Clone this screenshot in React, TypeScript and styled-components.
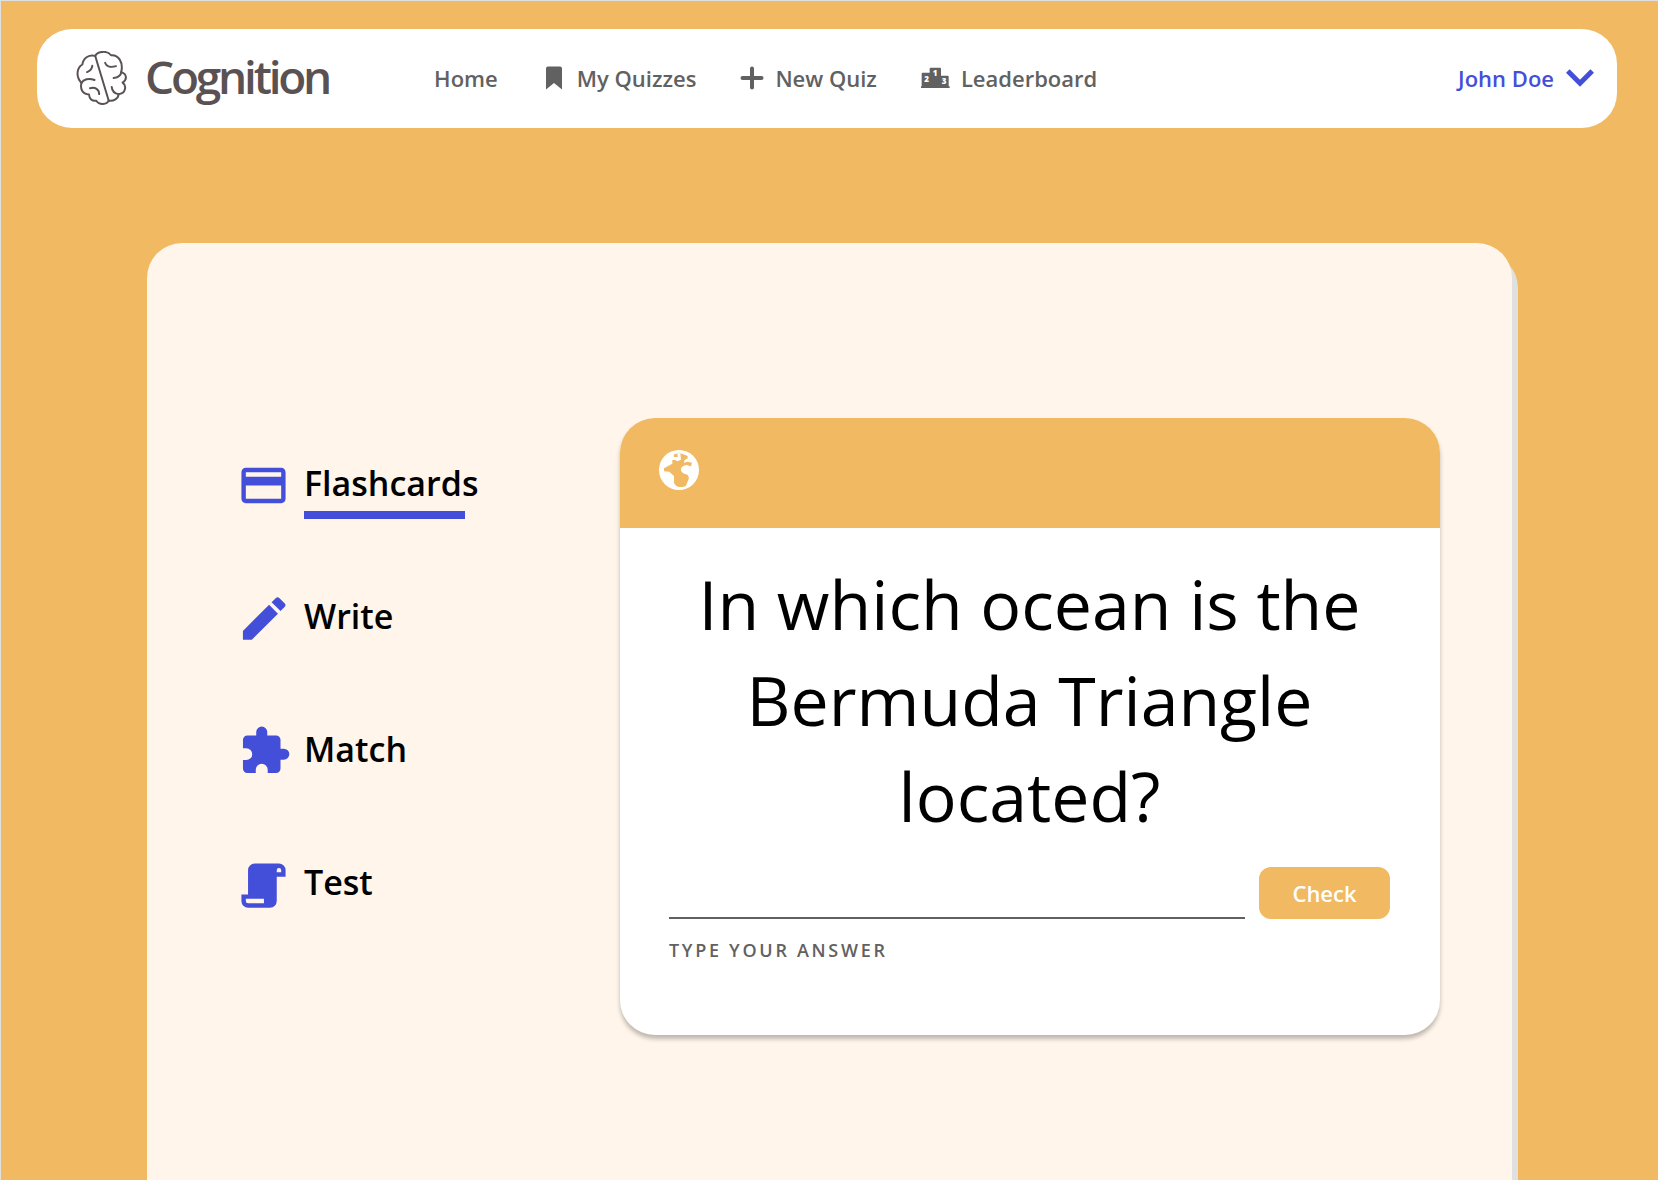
import React from "react";
import styled, { createGlobalStyle, ThemeProvider } from "styled-components";

const theme = {
  amber: "#f0b962",
  cream: "#fff5ea",
  indigo: "#444fd9",
  grey: "#616161",
  logo: "#5a5152",
  edge: "#e0e0e0",
};

const GlobalStyle = createGlobalStyle`
  *, *::before, *::after { box-sizing: border-box; }
  body {
    margin: 0;
    background: ${theme.amber};
    font-family: "Open Sans", "Noto Sans", sans-serif;
  }
  svg { display: block; flex: none; }
`;

const Page = styled.div`
  display: flex;
  flex-direction: column;
  min-height: 100vh;
  border-top: 1px solid ${(p) => p.theme.edge};
  border-left: 1px solid ${(p) => p.theme.edge};
`;

const TopBar = styled.header`
  display: flex;
  align-items: center;
  min-height: 99px;
  margin: 28px 41px 0 36px;
  padding: 0 23px 2px 39px;
  border-radius: 35px;
  background: #fff;
`;

const Brand = styled.a`
  display: flex;
  align-items: center;
  gap: 18px;
  color: ${(p) => p.theme.logo};
  text-decoration: none;
`;

const BrandName = styled.span`
  padding-bottom: 4px;
  font-size: 46px;
  font-weight: 600;
  line-height: 56px;
  letter-spacing: -0.07em;
`;

const Links = styled.nav`
  display: flex;
  align-items: center;
  gap: 44px;
  margin-left: 105px;
`;

const NavLink = styled.a`
  display: flex;
  align-items: center;
  gap: 11px;
  color: ${(p) => p.theme.grey};
  font-size: 22px;
  font-weight: 600;
  line-height: 30px;
  text-decoration: none;
  white-space: nowrap;
`;

const UserButton = styled.button`
  display: flex;
  align-items: center;
  gap: 12px;
  margin-left: auto;
  padding: 0;
  border: 0;
  background: none;
  color: ${(p) => p.theme.indigo};
  font: inherit;
  font-size: 22px;
  font-weight: 600;
  line-height: 30px;
  white-space: nowrap;
  cursor: pointer;
`;

const Panel = styled.main`
  display: grid;
  grid-template-columns: 383px minmax(0, 1fr);
  align-items: start;
  flex: 1;
  margin: 115px 146px 0;
  padding: 175px 72px 90px 90px;
  border-radius: 35px 35px 0 0;
  background: ${(p) => p.theme.cream};
  box-shadow: 6px 10px 0 ${(p) => p.theme.edge};
`;

const Modes = styled.nav`
  display: grid;
  grid-auto-rows: 133px;
  justify-items: start;
  padding-top: 41px;
`;

const ModeLink = styled.a`
  display: flex;
  align-items: flex-start;
  gap: 14px;
  color: ${(p) => p.theme.indigo};
  text-decoration: none;
`;

const ModeName = styled.span<{ $active?: boolean }>`
  color: #000;
  font-size: 34px;
  font-weight: 600;
  line-height: 48px;

  &::after {
    content: "";
    display: ${(p) => (p.$active ? "block" : "none")};
    width: 92%;
    height: 8px;
    margin-top: 4px;
    background: ${(p) => p.theme.indigo};
  }
`;

const Card = styled.section`
  overflow: hidden;
  border-radius: 35px;
  background: #fff;
  box-shadow: 0 4px 4px rgba(0, 0, 0, 0.25);
`;

const CardHead = styled.div`
  height: 110px;
  padding: 32px 39px;
  background: ${(p) => p.theme.amber};
`;

const CardBody = styled.div`
  padding: 28px 50px 73px 49px;
`;

const Question = styled.h1`
  margin: 0;
  font-size: 68px;
  font-weight: 400;
  line-height: 96px;
  text-align: center;
`;

const AnswerForm = styled.form`
  display: grid;
  grid-template-columns: minmax(0, 1fr) 131px;
  column-gap: 14px;
  row-gap: 19px;
  margin-top: 23px;
`;

const AnswerInput = styled.input`
  width: 100%;
  height: 52px;
  padding: 0;
  border: 0;
  border-bottom: 2px solid ${(p) => p.theme.grey};
  border-radius: 0;
  background: none;
  font: inherit;
  font-size: 22px;
  outline: none;
`;

const AnswerLabel = styled.label`
  grid-row: 2;
  color: ${(p) => p.theme.grey};
  font-size: 18px;
  font-weight: 600;
  line-height: 24px;
  letter-spacing: 0.15em;
`;

const CheckButton = styled.button`
  height: 52px;
  padding: 0;
  border: 0;
  border-radius: 12px;
  background: ${(p) => p.theme.amber};
  color: #fff;
  font: inherit;
  font-size: 22px;
  font-weight: 600;
  cursor: pointer;
`;

const BrainLogo = () => (
  <svg width="51" height="54" viewBox="34 31 154 164" fill="none" stroke="currentColor" strokeWidth="6" strokeLinecap="round" strokeLinejoin="round" aria-hidden="true">
    <path d="M92 46 133 182" />
    <path d="M92 46C75 40 55 52 53 72C36 82 32 108 50 128C46 146 52 162 73 163C74 176 82 184 95 182C104 196 128 194 133 182" />
    <path d="M92 46C98 32 128 28 140 44C162 42 178 64 171 95C188 100 190 118 175 127C188 136 185 160 163 162C162 176 148 184 133 182" />
    <path d="M83 76C82 86 77 91 67 95" />
    <path d="M50 128C56 117 72 112 90 119" />
    <path d="M76 144C92 139 104 148 104 162" />
    <path d="M122 67C126 78 139 82 155 77" />
    <path d="M171 95C170 104 162 111 148 113" />
    <path d="M142 140C143 152 150 160 163 162" />
  </svg>
);

const BookmarkIcon = () => (
  <svg width="24" height="24" viewBox="0 0 24 24" fill="currentColor" aria-hidden="true">
    <path d="M6 0.500H18A2 2 0 0 1 20 2.500V23.500L12 17L4 23.500V2.500A2 2 0 0 1 6 0.500Z" />
  </svg>
);

const PlusIcon = () => (
  <svg width="24" height="24" viewBox="0 0 24 24" fill="none" stroke="currentColor" strokeWidth="4" strokeLinecap="round" aria-hidden="true">
    <path d="M12 2.500V21.500M2.500 12H21.500" />
  </svg>
);

const PodiumNumber = styled.text`
  fill: #fff;
  font-size: 24px;
  font-weight: 800;
  text-anchor: middle;
`;

const PodiumIcon = () => (
  <svg width="29" height="22" viewBox="574 82 87 66" fill="currentColor" aria-hidden="true">
    <path d="M576 102a3 3 0 0 1 3-3H600V87a3 3 0 0 1 3-3H631a3 3 0 0 1 3 3V108H654a3 3 0 0 1 3 3V140H660V145H574V140H576Z" />
    <PodiumNumber x="591" y="126">2</PodiumNumber>
    <PodiumNumber x="616" y="110">1</PodiumNumber>
    <PodiumNumber x="643" y="133">3</PodiumNumber>
  </svg>
);

const ChevronIcon = () => (
  <svg width="28" height="18" viewBox="0 0 28 18" fill="none" stroke="currentColor" strokeWidth="5" aria-hidden="true">
    <path d="M1.800 2 14 14.200 26.200 2" />
  </svg>
);

const ModeIcon = ({ box, d }: { box: string; d: string }) => (
  <svg width="53" height="53" viewBox={box} fill="currentColor" fillRule="evenodd" aria-hidden="true">
    <path d={d} />
  </svg>
);

const GlobeIcon = () => (
  <svg width="40" height="40" viewBox="177 150 120 120" role="img" aria-label="Geography">
    <circle cx="237" cy="210" r="60" fill="#fff" />
    <path
      fill={theme.amber}
      d="M192 205 217 191V180H226L232 184 243 179 241 160 263 168V175L254 180 252 189 262 185 276 188 273 199 260 195C247 196 242 204 243 211C246 222 256 221 263 225L267 234 258 257C250 262 235 262 228 257L222 249V228L208 215 192 214ZM221 164 232 160 233 171 222 171Z"
    />
  </svg>
);

const modes = [
  {
    name: "Flashcards",
    active: true,
    box: "0 0 24 24",
    d: "M20 4H4c-1.110 0-1.990.89-1.990 2L2 18c0 1.110.89 2 2 2h16c1.110 0 2-.89 2-2V6c0-1.110-.89-2-2-2zm0 14H4v-6h16v6zm0-10H4V6h16v2z",
  },
  {
    name: "Write",
    box: "0.5 0.8 22.4 22.4",
    d: "M3 17.250V21h3.750L17.810 9.940l-3.750-3.750L3 17.250zM20.710 7.040c.39-.39.39-1.020 0-1.410l-2.340-2.340c-.39-.39-1.020-.39-1.410 0l-1.830 1.830 3.750 3.750 1.830-1.830z",
  },
  {
    name: "Match",
    box: "-0.7 0.3 24 24",
    d: "M20.500 11H19V7a2 2 0 0 0-2-2h-4V3.500a2.500 2.500 0 0 0-5 0V5H4a2 2 0 0 0-2 2v3.800h1.500a2.700 2.700 0 0 1 0 5.400H2V20a2 2 0 0 0 2 2h3.800v-1.500a2.700 2.700 0 0 1 5.400 0V22H17a2 2 0 0 0 2-2v-4h1.500a2.500 2.500 0 0 0 0-5z",
  },
  {
    name: "Test",
    box: "0 -0.5 24 24",
    d: "M8 2h11a3 3 0 0 1 3 3v3h-4v11a3 3 0 0 1-3 3H5a3 3 0 0 1-3-3v-3h3V5a3 3 0 0 1 3-3zM19 4a1 1 0 0 0-1 1v1h2V5a1 1 0 0 0-1-1zM4 18v1a1 1 0 0 0 1 1h7.200v-2z",
  },
];

export default function App() {
  return (
    <ThemeProvider theme={theme}>
      <GlobalStyle />
      <Page>
        <TopBar>
          <Brand href="#home">
            <BrainLogo />
            <BrandName>Cognition</BrandName>
          </Brand>
          <Links aria-label="Main">
            <NavLink href="#home">Home</NavLink>
            <NavLink href="#quizzes">
              <BookmarkIcon />
              My Quizzes
            </NavLink>
            <NavLink href="#new">
              <PlusIcon />
              New Quiz
            </NavLink>
            <NavLink href="#leaderboard">
              <PodiumIcon />
              Leaderboard
            </NavLink>
          </Links>
          <UserButton type="button" aria-haspopup="menu">
            John Doe
            <ChevronIcon />
          </UserButton>
        </TopBar>
        <Panel>
          <Modes aria-label="Study modes">
            {modes.map((mode) => (
              <ModeLink key={mode.name} href={`#${mode.name.toLowerCase()}`} aria-current={mode.active ? "page" : undefined}>
                <ModeIcon box={mode.box} d={mode.d} />
                <ModeName $active={mode.active}>{mode.name}</ModeName>
              </ModeLink>
            ))}
          </Modes>
          <Card>
            <CardHead>
              <GlobeIcon />
            </CardHead>
            <CardBody>
              <Question>In which ocean is the Bermuda Triangle located?</Question>
              <AnswerForm onSubmit={(event) => event.preventDefault()}>
                <AnswerInput id="answer" type="text" autoComplete="off" />
                <CheckButton type="submit">Check</CheckButton>
                <AnswerLabel htmlFor="answer">TYPE YOUR ANSWER</AnswerLabel>
              </AnswerForm>
            </CardBody>
          </Card>
        </Panel>
      </Page>
    </ThemeProvider>
  );
}
